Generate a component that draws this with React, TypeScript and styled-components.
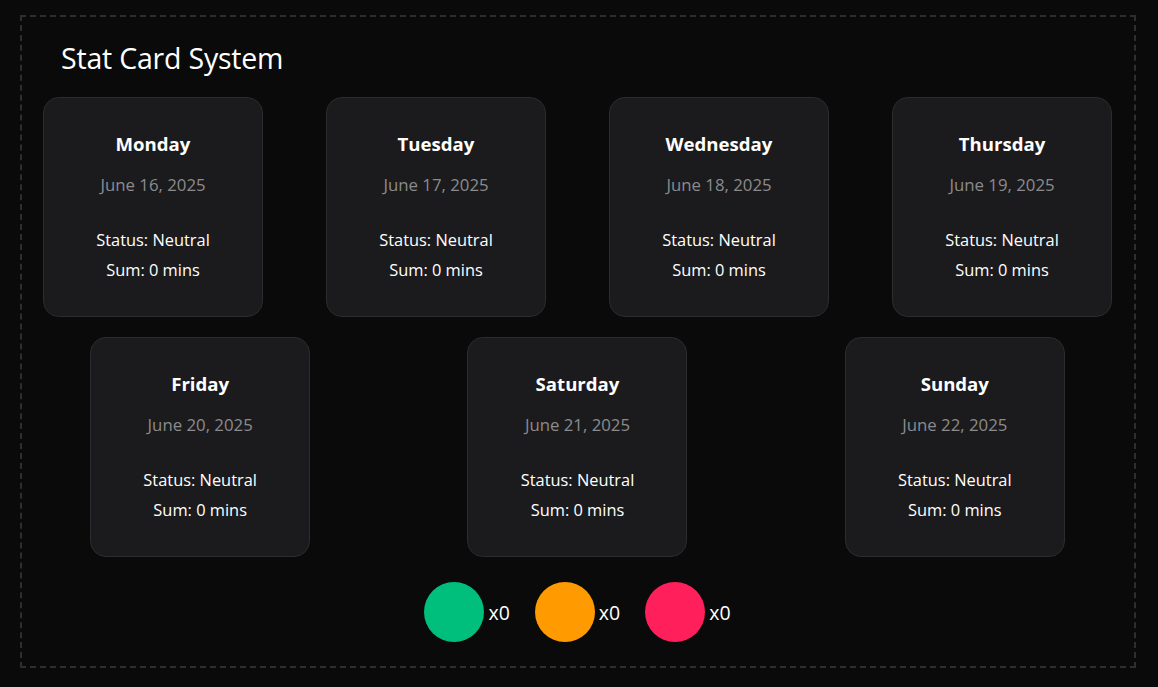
import React from "react";
import styled, { createGlobalStyle } from "styled-components";

const Global = createGlobalStyle`
  html, body { margin: 0; padding: 0; background: #0a0a0a; }
  body { font-family: "Open Sans", "Noto Sans", sans-serif; color: #fff; }
`;

const Page = styled.div`
  padding: 15px 22px 19px 20px;
  box-sizing: border-box;
  height: 687px;
`;

const Frame = styled.div`
  border: 2px dashed #2e2e2e;
  height: 100%;
  box-sizing: border-box;
  padding: 21px 22px 24px 21px;
  display: flex;
  flex-direction: column;
`;

const Title = styled.h1`
  margin: 0 0 19px 18px;
  font-size: 28.5px;
  font-weight: 400;
  line-height: 40px;
  letter-spacing: -0.2px;
`;

const Grid = styled.div`
  display: flex;
  flex-wrap: wrap;
  justify-content: space-around;
  column-gap: 63px;
  row-gap: 20px;
`;

const Card = styled.div`
  width: 220px;
  height: 220px;
  box-sizing: border-box;
  background: #1b1b1d;
  border: 1px solid #2c2c2e;
  border-radius: 16px;
  display: flex;
  flex-direction: column;
  align-items: center;
  padding-top: 32px;
`;

const Day = styled.div`
  font-size: 18.6px;
  font-weight: 700;
  line-height: 28px;
`;

const DateText = styled.div`
  font-size: 16.8px;
  color: #8b8b8d;
  margin-top: 15px;
  line-height: 24px;
`;

const Info = styled.div`
  font-size: 16.4px;
  line-height: 30px;
  margin-top: 28px;
  text-align: center;
`;

const Legend = styled.div`
  display: flex;
  justify-content: center;
  gap: 25px;
  margin-top: 25px;
`;

const LegendItem = styled.div`
  display: flex;
  align-items: center;
  gap: 4px;
  font-size: 19.5px;
`;

const Dot = styled.div<{ $c: string }>`
  width: 60px;
  height: 60px;
  border-radius: 50%;
  background: ${(p) => p.$c};
`;

const days = [
  ["Monday", "June 16, 2025"],
  ["Tuesday", "June 17, 2025"],
  ["Wednesday", "June 18, 2025"],
  ["Thursday", "June 19, 2025"],
  ["Friday", "June 20, 2025"],
  ["Saturday", "June 21, 2025"],
  ["Sunday", "June 22, 2025"],
];

export default function App() {
  return (
    <>
      <Global />
      <Page>
        <Frame>
          <Title>Stat Card System</Title>
          <Grid>
            {days.map(([d, dt]) => (
              <Card key={d}>
                <Day>{d}</Day>
                <DateText>{dt}</DateText>
                <Info>
                  Status: Neutral
                  <br />
                  Sum: 0 mins
                </Info>
              </Card>
            ))}
          </Grid>
          <Legend>
            {["#00bf7c", "#ff9a00", "#ff1f5a"].map((c) => (
              <LegendItem key={c}>
                <Dot $c={c} />
                x0
              </LegendItem>
            ))}
          </Legend>
        </Frame>
      </Page>
    </>
  );
}
